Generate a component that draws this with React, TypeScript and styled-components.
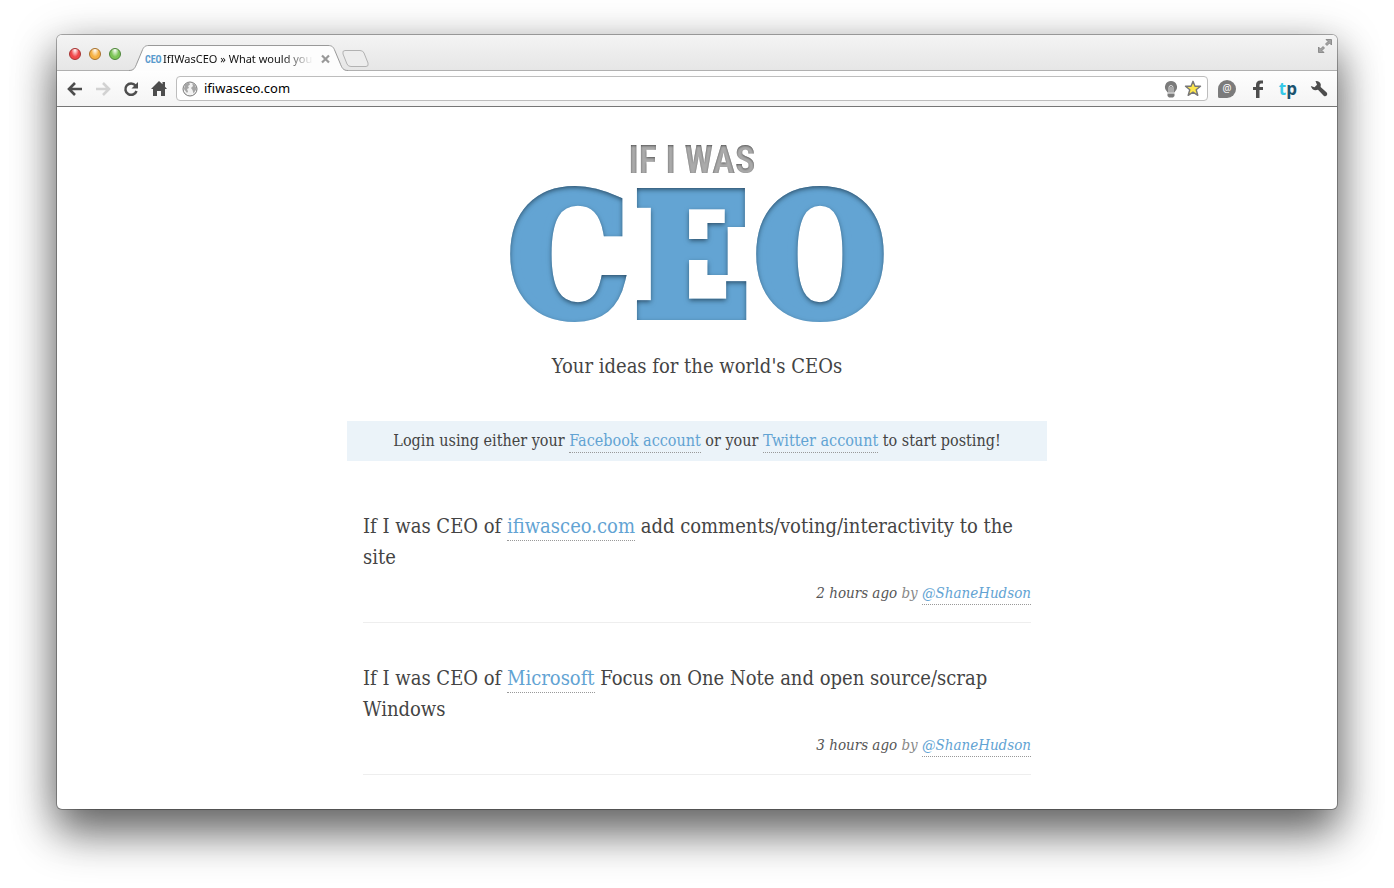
import React from "react";
import styled, { createGlobalStyle } from "styled-components";

const serif = `"DejaVu Serif Condensed", Georgia, serif`;
const ui = `"Noto Sans", "Lucida Grande", sans-serif`;

const GlobalStyle = createGlobalStyle`
  *, *::before, *::after { box-sizing: border-box; }
  body { margin: 0; background: #fff; overflow-x: hidden; }
`;

const Desktop = styled.div`
  min-height: 100vh;
  padding: 35px 57px 79px;
  overflow: hidden;
`;

const Window = styled.div`
  display: flex;
  flex-direction: column;
  min-height: calc(100vh - 114px);
  border-radius: 5px;
  background: #fff;
  box-shadow:
    0 0 0 1px rgba(0, 0, 0, 0.3),
    0 26px 44px rgba(0, 0, 0, 0.45),
    0 10px 44px rgba(0, 0, 0, 0.35);
`;

const TabStrip = styled.header`
  display: flex;
  align-items: flex-end;
  height: 36px;
  padding: 0 5px 0 12px;
  border-radius: 5px 5px 0 0;
  border-bottom: 1px solid #b0b0b0;
  background: linear-gradient(#f4f4f4, #ececec 55%, #e6e6e6);
`;

const Lights = styled.div`
  display: flex;
  gap: 8px;
  align-self: center;
  padding-top: 2px;
  margin-right: 8px;
`;

const Light = styled.button<{ $color: string; $edge: string }>`
  width: 12px;
  height: 12px;
  padding: 0;
  border: 1px solid ${(p) => p.$edge};
  border-radius: 50%;
  background: radial-gradient(ellipse at 50% 10%, #fff 0, ${(p) => p.$color} 55%, ${(p) => p.$color} 80%, #fff 130%);
`;

const Tab = styled.div`
  position: relative;
  display: flex;
  align-items: center;
  width: 222px;
  height: 26px;
  margin-bottom: -1px;
  padding: 2px 18px 0 16px;
  font: 11px/16px ${ui};
`;

const TabShape = styled.svg`
  position: absolute;
  inset: 0;
`;

const TabTitle = styled.span`
  position: relative;
  flex: 1;
  overflow: hidden;
  white-space: nowrap;
  color: #111;
  mask-image: linear-gradient(90deg, #000 80%, transparent);
`;

const Favicon = styled.span`
  position: relative;
  width: 18px;
  padding-top: 2px;
  color: #5a9bcd;
  font: bold 10px/16px "Roboto Condensed", Roboto, sans-serif;
`;

const IconButton = styled.button`
  position: relative;
  display: flex;
  padding: 0;
  border: 0;
  background: none;
`;

const NewTab = styled(IconButton)`
  margin: 0 auto 3px -10px;
`;

const Expand = styled(IconButton)`
  margin-bottom: 17px;
`;

const Toolbar = styled.nav`
  display: flex;
  align-items: center;
  height: 36px;
  padding: 0 9px 0 10px;
  border-bottom: 1px solid #767676;
  background: linear-gradient(#fefefe, #f4f4f4);
`;

const NavButtons = styled.div`
  display: flex;
  gap: 12px;
  margin-right: 9px;
`;

const Extensions = styled.div`
  display: flex;
  align-items: center;
  gap: 13px;
  margin-left: 10px;
`;

const AddressBar = styled.div`
  display: flex;
  flex: 1;
  align-items: center;
  gap: 5px;
  height: 25px;
  padding: 0 5px;
  border: 1px solid #bdbdbd;
  border-radius: 4px;
  background: #fff;
`;

const Address = styled.input`
  flex: 1;
  min-width: 0;
  height: 23px;
  padding: 0 0 2px 1px;
  border: 0;
  outline: 0;
  background: none;
  color: #000;
  font: 13px/20px ${ui};
`;

const TpButton = styled(IconButton)`
  color: #1c5470;
  font: bold 17px/18px "Open Sans", sans-serif;
  span { color: #35c9e8; }
`;

const Page = styled.main`
  width: 100%;
  max-width: 700px;
  margin: 0 auto;
  color: #444;
  font-family: ${serif};
`;

const Logo = styled.h1`
  display: flex;
  justify-content: center;
  margin: 24px 0 0;
  svg { overflow: visible; }
`;

const Tagline = styled.p`
  margin: 21px 0 0;
  text-align: center;
  font-size: 20px;
  line-height: 32px;
`;

const Login = styled.p`
  margin: 39px 0 0;
  padding: 4px 16px;
  background: #ebf3f9;
  text-align: center;
  font-size: 16px;
  line-height: 32px;
`;

const Link = styled.a`
  padding-bottom: 2px;
  color: #62a3d3;
  text-decoration: none;
  border-bottom: 1px dotted #999;
`;

const Ideas = styled.ul`
  margin: 50px 0 34px;
  padding: 0 16px;
  list-style: none;
`;

const Idea = styled.li`
  padding-bottom: 14px;
  border-bottom: 1px solid #eee;

  & + & { margin-top: 40px; }
`;

const IdeaText = styled.p`
  margin: 0;
  font-size: 20px;
  line-height: 31px;
`;

const Meta = styled.p`
  margin: 5px 0 0;
  color: #888;
  text-align: right;
  font-size: 15px;
  font-style: italic;
  line-height: 30px;
  time { color: #555; }
`;

const ideas = [
  { company: "ifiwasceo.com", text: "add comments/voting/interactivity to the site", when: "2 hours ago", by: "@ShaneHudson" },
  { company: "Microsoft", text: "Focus on One Note and open source/scrap Windows", when: "3 hours ago", by: "@ShaneHudson" },
];

function LogoArt() {
  return (
    <svg width="410" height="198" viewBox="0 0 410 198" role="img" aria-label="If I was CEO">
      <defs>
        <filter id="inset" x="-5%" y="-5%" width="110%" height="110%">
          <feOffset in="SourceAlpha" dy="2" result="moved" />
          <feGaussianBlur in="moved" stdDeviation="2.500" result="soft" />
          <feComposite in="SourceAlpha" in2="soft" operator="out" result="rim" />
          <feFlood floodColor="#0d2436" floodOpacity="0.9" />
          <feComposite in2="rim" operator="in" result="shade" />
          <feMerge>
            <feMergeNode in="SourceGraphic" />
            <feMergeNode in="shade" />
          </feMerge>
        </filter>
        <filter id="insetSmall" x="-5%" y="-5%" width="110%" height="110%">
          <feOffset in="SourceAlpha" dy="1" result="moved" />
          <feGaussianBlur in="moved" stdDeviation="1" result="soft" />
          <feComposite in="SourceAlpha" in2="soft" operator="out" result="rim" />
          <feFlood floodColor="#222" floodOpacity="0.9" />
          <feComposite in2="rim" operator="in" result="shade" />
          <feMerge>
            <feMergeNode in="SourceGraphic" />
            <feMergeNode in="shade" />
          </feMerge>
        </filter>
      </defs>
      <text x="200" y="42" textAnchor="middle" fontFamily='"Roboto Condensed", Roboto, sans-serif' fontWeight="700" fontSize="38" fill="#aaa" filter="url(#insetSmall)">IF I WAS</text>
      <text x="17 143 263" y="184" fontFamily='"DejaVu Serif Condensed", "DejaVu Serif", serif' fontWeight="700" fontSize="166" fill="#64a4d3" stroke="#64a4d3" strokeWidth="10" filter="url(#inset)">CEO</text>
    </svg>
  );
}

export default function App() {
  return (
    <>
      <GlobalStyle />
      <Desktop>
        <Window>
          <TabStrip>
            <Lights>
              <Light aria-label="Close" $color="#f0474a" $edge="#a5302f" />
              <Light aria-label="Minimise" $color="#f6b143" $edge="#a8702a" />
              <Light aria-label="Zoom" $color="#7cc556" $edge="#4a8436" />
            </Lights>
            <Tab>
              <TabShape width="222" height="26" viewBox="0 0 222 26">
                <path d="M0 25.500C5 25.500 6 23 8 18L13 6C14.500 2 16 .5 20 .5H199C203 .5 204.500 2 206 6L211 18C213 23 214 25.500 219 25.500V26H0Z" fill="#fdfdfd" />
                <path d="M0 25.500C5 25.500 6 23 8 18L13 6C14.500 2 16 .5 20 .5H199C203 .5 204.500 2 206 6L211 18C213 23 214 25.500 219 25.500" fill="none" stroke="#999" />
              </TabShape>
              <Favicon aria-hidden="true">CEO</Favicon>
              <TabTitle>IfIWasCEO » What would you</TabTitle>
              <IconButton aria-label="Close tab">
                <svg width="20" height="10" viewBox="0 0 20 10"><path d="M9 1.500l7 7M16 1.500l-7 7" stroke="#999" strokeWidth="2.200" /></svg>
              </IconButton>
            </Tab>
            <NewTab aria-label="New tab">
              <svg width="28" height="17" viewBox="0 0 28 17"><path d="M4 .5H19Q22 .5 23 3L27 13Q28 16.500 25 16.500H10Q7 16.500 6 14L2 4Q1 .5 4 .5Z" fill="#ededed" stroke="#b2b2b2" /></svg>
            </NewTab>
            <Expand aria-label="Full screen">
              <svg width="14" height="14" viewBox="0 0 14 14" fill="#a2a2a2" stroke="#7d7d7d" strokeWidth=".8"><path d="M8 .5h5.500V6L11.500 4 9 6.500 7.500 5 10 2.500zM.5 8l2 2L5 7.500 6.500 9 4 11.500l2 2H.5z" /></svg>
            </Expand>
          </TabStrip>
          <Toolbar aria-label="Browser">
            <NavButtons>
              <IconButton aria-label="Back">
                <svg width="16" height="16" viewBox="0 0 16 16" fill="none" stroke="#4d4d4d" strokeWidth="2.600"><path d="M8 2L2 8l6 6M2 8h13" /></svg>
              </IconButton>
              <IconButton aria-label="Forward">
                <svg width="16" height="16" viewBox="0 0 16 16" fill="none" stroke="#d2d2d2" strokeWidth="2.600"><path d="M8 2l6 6-6 6M14 8H1" /></svg>
              </IconButton>
              <IconButton aria-label="Reload">
                <svg width="16" height="16" viewBox="0 0 16 16"><path d="M12.500 4.500A5.700 5.700 0 1 0 13.500 10" fill="none" stroke="#4d4d4d" strokeWidth="2.500" /><path d="M15 1v6.500H8.500z" fill="#4d4d4d" /></svg>
              </IconButton>
              <IconButton aria-label="Home">
                <svg width="16" height="16" viewBox="0 0 16 16" fill="#4d4d4d"><path d="M8 0l3.500 3.300V1H14v4.700L16 8h-2v7h-4v-5H6v5H2V8H0z" /></svg>
              </IconButton>
            </NavButtons>
            <AddressBar>
              <svg width="16" height="16" viewBox="0 0 16 16" aria-hidden="true"><circle cx="8" cy="8" r="7" fill="#f2f2f2" stroke="#777" /><path d="M3 3l4-1.500 1 2L6 5l1 2-2 1 1 2.500L5 12 2 8zM10 2l3 2 1.500 4-2 3-1 1.500-1-3.500-1.500-2L11 5z" fill="#a5a5a5" /></svg>
              <Address aria-label="Address" defaultValue="ifiwasceo.com" />
              <IconButton aria-label="Lightbulb">
                <svg width="16" height="18" viewBox="0 0 16 18"><path d="M8 1a6 6 0 0 0-4.200 10.300L4.500 12.500h7l.7-1.200A6 6 0 0 0 8 1zM4.500 13.500h7V16l-1.500 1.500H6L4.500 16z" fill="#7b7b7b" /><path d="M6 12.500V7.500a2 2 0 0 1 4 0v5M8 7v5.500" fill="none" stroke="#ddd" /></svg>
              </IconButton>
              <IconButton aria-label="Bookmark">
                <svg width="18" height="17" viewBox="0 0 18 17"><path d="M9 1.300l2 5h5.500l-4.300 3.500 1.600 5.500L9 12.200l-4.800 3.100 1.600-5.500L1.500 6.300H7z" fill="#fde74c" stroke="#777" strokeWidth="1.400" strokeLinejoin="round" /></svg>
              </IconButton>
            </AddressBar>
            <Extensions>
              <IconButton aria-label="Mentions">
                <svg width="18" height="18" viewBox="0 0 18 18"><path d="M0 9a9 9 0 1 1 9 9H1.500Q0 18 0 16.500z" fill="#7b7b7b" /><text x="9" y="12" textAnchor="middle" fontFamily="Noto Sans" fontSize="10" fill="#fff">@</text></svg>
              </IconButton>
              <IconButton aria-label="Facebook">
                <svg width="17" height="18" viewBox="0 0 17 18"><path d="M7 18v-8H4V7h3V5q0-4.500 4.500-4.500H14v3h-2Q10.500 3.500 10.500 5V7H14v3h-3.500v8z" fill="#4d4d4d" /></svg>
              </IconButton>
              <TpButton aria-label="tp"><span>t</span>p</TpButton>
              <IconButton aria-label="Settings">
                <svg width="18" height="18" viewBox="0 0 18 18"><path d="M5.500 1Q10 .8 10.800 4.500L10.600 7l6.100 5.500q1.300 1.500 0 3t-3 .3L8 9.800Q2.500 11.500.8 6L4.500 7.300 7 4.800z" fill="#4d4d4d" /></svg>
              </IconButton>
            </Extensions>
          </Toolbar>
          <Page>
            <Logo><LogoArt /></Logo>
            <Tagline>Your ideas for the world's CEOs</Tagline>
            <Login>
              Login using either your <Link href="#facebook">Facebook account</Link> or your{" "}
              <Link href="#twitter">Twitter account</Link> to start posting!
            </Login>
            <Ideas>
              {ideas.map((idea) => (
                <Idea key={idea.company}>
                  <IdeaText>
                    If I was CEO of <Link href="#company">{idea.company}</Link> {idea.text}
                  </IdeaText>
                  <Meta>
                    <time>{idea.when}</time> by <Link href="#author">{idea.by}</Link>
                  </Meta>
                </Idea>
              ))}
            </Ideas>
          </Page>
        </Window>
      </Desktop>
    </>
  );
}
